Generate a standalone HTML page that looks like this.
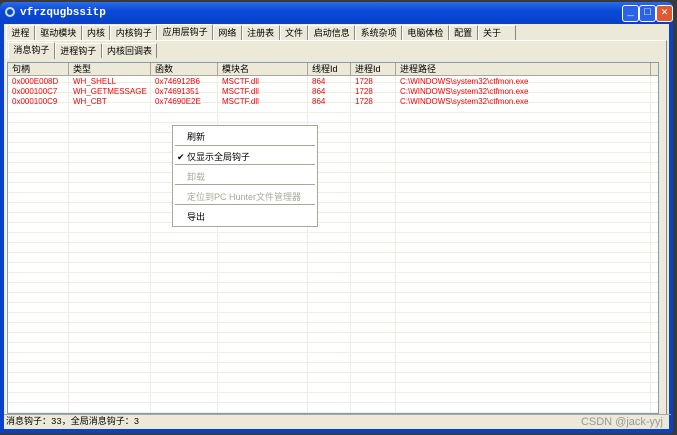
<html><head><style>
body{margin:0;width:677px;height:435px;overflow:hidden;background:#3a3a3a;font-family:"Liberation Sans","Noto Sans CJK SC",sans-serif;font-size:9px;position:relative}
.win{position:absolute;left:0;top:2px;width:673px;height:431px;background:#0842c6;border-radius:6px 6px 0 0}
.title{position:absolute;left:0;top:0;right:0;height:22px;background:linear-gradient(#2a6ce8,#0a4ad8 40%,#0840c8);border-radius:6px 6px 0 0;color:#fff;font:bold 11px "Liberation Mono",monospace;}
.title span{position:absolute;left:20px;top:5px}
.ico{position:absolute;left:5px;top:5px;width:10px;height:10px;border-radius:50%;border:2px solid #cde;box-sizing:border-box}
.btn{position:absolute;top:3px;width:17px;height:17px;border:1px solid #fff;border-radius:3px;box-sizing:border-box;background:#2a62e8;color:#fff;font-size:11px;text-align:center;line-height:15px}
.client{position:absolute;left:4px;top:22px;width:665px;height:405px;background:#ece9d8}
.tabs{position:absolute;left:2px;top:1px;height:15px;display:flex}
.tab{border:1px solid #fff;border-right:1px solid #888;border-bottom:none;padding:0 4.4px;height:14px;line-height:14px;font-size:9px;background:#ece9d8}
.tab.sel{margin-top:-1px;height:16px}
.panel{position:absolute;left:2px;top:16px;width:659px;height:373px;border:1px solid #fff;border-right-color:#888;border-bottom-color:#888}
.list{position:absolute;left:3px;top:38px;width:650px;height:350px;background:#fff;border:1px solid #7f9db9;overflow:hidden}
.hdr{position:absolute;left:0;top:0;height:12px;width:650px;background:#ece9d8;border-bottom:1px solid #aca899}
.hdr div,.row div{position:absolute;top:0;line-height:12px;padding-left:4px}
.hdr div{border-right:1px solid #aca899;height:12px;box-sizing:border-box}
.row{position:absolute;left:0;height:10px;color:#f00;font-size:8px}
.row div{line-height:10px}
.status{position:absolute;left:0;top:390px;width:665px;height:15px;border-top:1px solid #aca899;font:9px "Liberation Mono","Noto Sans CJK SC",monospace;line-height:15px;padding-left:2px}
.menu{position:absolute;left:172px;top:125px;width:144px;height:100px;background:#fff;border:1px solid #aca899;font-size:9px}
.mi{position:absolute;left:14px}
.sep{position:absolute;left:2px;right:2px;height:1px;background:#aca899}
</style></head><body>
<div class="win">
<div class="title"><div class="ico"></div><span>vfrzqugbssitp</span>
<div class="btn" style="left:622px">_</div><div class="btn" style="left:639px">□</div><div class="btn" style="left:656px;background:#e05a30">✕</div></div>
<div class="client">
<div class="tabs"><div class="tab">进程</div><div class="tab">驱动模块</div><div class="tab">内核</div><div class="tab">内核钩子</div><div class="tab sel">应用层钩子</div><div class="tab">网络</div><div class="tab">注册表</div><div class="tab">文件</div><div class="tab">启动信息</div><div class="tab">系统杂项</div><div class="tab">电脑体检</div><div class="tab">配置</div><div class="tab" style="padding-right:14px">关于</div></div>
<div class="panel"></div>
<div class="tabs" style="top:19px;left:4px"><div class="tab sel">消息钩子</div><div class="tab">进程钩子</div><div class="tab">内核回调表</div></div>
<div class="list" style="background:repeating-linear-gradient(#fff 0 9px,#efeee0 9px 10px)">
<svg style="position:absolute;left:0;top:0" width="650" height="350"><g stroke="#efeee0"><line x1="60.5" y1="0" x2="60.5" y2="350"/><line x1="142.5" y1="0" x2="142.5" y2="350"/><line x1="209.5" y1="0" x2="209.5" y2="350"/><line x1="299.5" y1="0" x2="299.5" y2="350"/><line x1="342.5" y1="0" x2="342.5" y2="350"/><line x1="387.5" y1="0" x2="387.5" y2="350"/><line x1="642.5" y1="0" x2="642.5" y2="350"/></g></svg>
<div class="hdr"><div style="left:0;width:61px">句柄</div><div style="left:61px;width:82px">类型</div><div style="left:143px;width:67px">函数</div><div style="left:210px;width:90px">模块名</div><div style="left:300px;width:43px">线程Id</div><div style="left:343px;width:45px">进程Id</div><div style="left:388px;width:255px">进程路径</div></div>
<div class="row" style="top:14px"><div style="left:0">0x000E008D</div><div style="left:61px">WH_SHELL</div><div style="left:143px">0x746912B6</div><div style="left:210px">MSCTF.dll</div><div style="left:300px">864</div><div style="left:343px">1728</div><div style="left:388px">C:\WINDOWS\system32\ctfmon.exe</div></div>
<div class="row" style="top:24px"><div style="left:0">0x000100C7</div><div style="left:61px">WH_GETMESSAGE</div><div style="left:143px">0x74691351</div><div style="left:210px">MSCTF.dll</div><div style="left:300px">864</div><div style="left:343px">1728</div><div style="left:388px">C:\WINDOWS\system32\ctfmon.exe</div></div>
<div class="row" style="top:34px"><div style="left:0">0x000100C9</div><div style="left:61px">WH_CBT</div><div style="left:143px">0x74690E2E</div><div style="left:210px">MSCTF.dll</div><div style="left:300px">864</div><div style="left:343px">1728</div><div style="left:388px">C:\WINDOWS\system32\ctfmon.exe</div></div>
</div>
<div class="status">消息钩子：33，全局消息钩子：3<span style="position:absolute;right:8px;color:#999;font-family:'Liberation Sans';font-size:11px">CSDN @jack-yyj</span></div>
</div></div>
<div class="menu">
<div class="mi" style="top:4px">刷新</div><div class="sep" style="top:19px"></div>
<div class="mi" style="top:24px;left:4px">✔ 仅显示全局钩子</div><div class="sep" style="top:38px"></div>
<div class="mi" style="top:44px;color:#aca899">卸载</div><div class="sep" style="top:58px"></div>
<div class="mi" style="top:64px;color:#aca899">定位到PC Hunter文件管理器</div><div class="sep" style="top:78px"></div>
<div class="mi" style="top:84px">导出</div>
</div>
</body></html>
